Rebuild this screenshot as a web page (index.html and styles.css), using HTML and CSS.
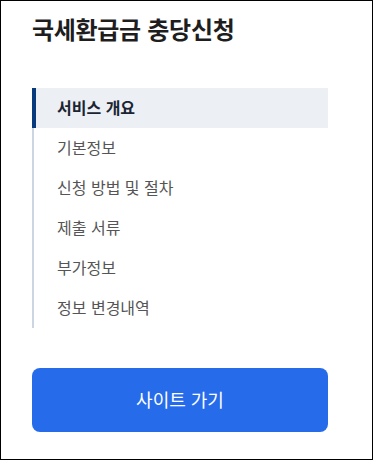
FILE: index.html
```html
<!DOCTYPE html>
<html lang="ko">
<head>
<meta charset="utf-8">
<link rel="stylesheet" href="styles.css">
</head>
<body>
<div class="panel">
  <h1 class="title">국세환급금 충당신청</h1>
  <nav class="toc">
    <a class="toc-item active">서비스 개요</a>
    <a class="toc-item">기본정보</a>
    <a class="toc-item">신청 방법 및 절차</a>
    <a class="toc-item">제출 서류</a>
    <a class="toc-item">부가정보</a>
    <a class="toc-item">정보 변경내역</a>
  </nav>
  <a class="site-btn">사이트 가기</a>
</div>
</body>
</html>
```
FILE: styles.css
```css
* { box-sizing: border-box; }
html, body { margin: 0; padding: 0; background: #fff; }
body {
  font-family: "Noto Sans CJK KR", "Noto Sans", sans-serif;
}
.panel {
  width: 373px;
  height: 460px;
  border: 1px solid #000;
  padding: 11px 44px 0 31px;
  display: flex;
  flex-direction: column;
}
.title {
  margin: 0;
  font-size: 24px;
  line-height: 34px;
  font-weight: 700;
  color: #1e1e1e;
  letter-spacing: -0.3px;
}
.toc {
  margin-top: 42px;
  display: flex;
  flex-direction: column;
  border-left: 2px solid #ccd5e2;
}
.toc-item {
  display: block;
  height: 40px;
  line-height: 38px;
  padding: 0 0 2px 23px;
  font-size: 16px;
  color: #555;
  text-decoration: none;
}
.toc-item.active {
  margin-left: -2px;
  border-left: 4px solid #083a7e;
  padding-left: 21px;
  background: #eceff4;
  color: #1a2433;
  font-weight: 700;
}
.site-btn {
  margin-top: 40px;
  height: 64px;
  padding-bottom: 3px;
  border-radius: 8px;
  background: #266cea;
  color: #fff;
  font-size: 18px;
  font-weight: 400;
  display: flex;
  align-items: center;
  justify-content: center;
  text-decoration: none;
}
```
